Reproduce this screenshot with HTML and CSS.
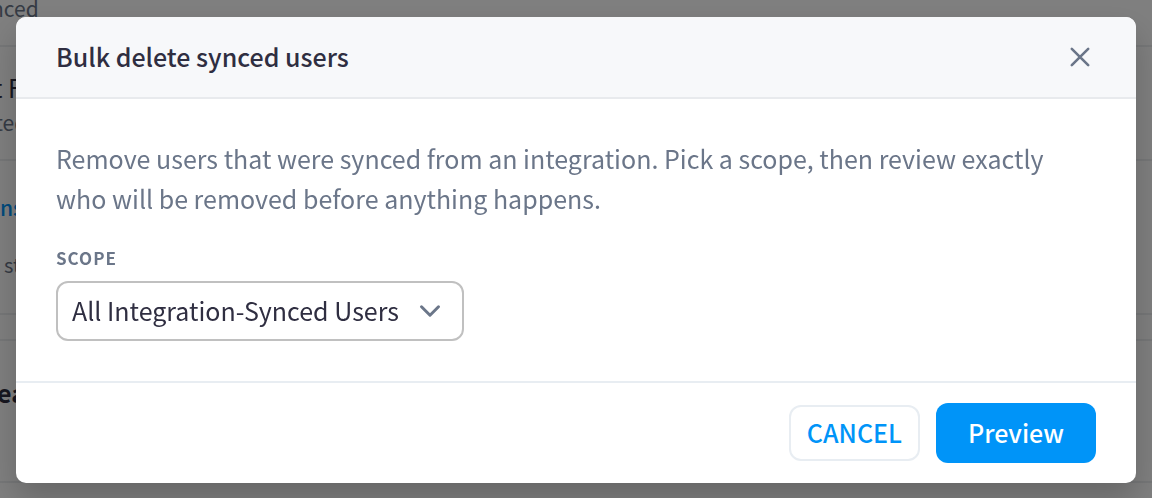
FILE: index.html
```html
<!DOCTYPE html>
<html lang="en">
<head>
    <meta charset="UTF-8">
    <meta name="viewport" content="width=device-width, initial-scale=1.0">
    <title>Bulk delete synced users</title>
    <link rel="stylesheet" href="styles.css">
</head>
<body>
    <div class="page" aria-hidden="true">
        <div class="page__row page__row--top">
            <p class="page__note">nced</p>
        </div>
        <div class="page__row page__row--item">
            <p class="page__name">t F</p>
            <p class="page__note">ted</p>
        </div>
        <div class="page__row page__row--links">
            <p class="page__link">ns</p>
            <p class="page__hint">st</p>
        </div>
        <div class="page__row page__row--gap"></div>
        <div class="page__row page__row--title">
            <p class="page__title">ea</p>
        </div>
    </div>
    <div class="overlay">
        <form class="modal" role="dialog" aria-modal="true" aria-labelledby="modal-title">
            <header class="modal__header">
                <h1 class="modal__title" id="modal-title">Bulk delete synced users</h1>
                <button class="modal__close" type="button" aria-label="Close">
                    <svg width="32" height="32" viewBox="0 0 32 32" fill="none" stroke="currentColor" stroke-width="2.6" stroke-linecap="round">
                        <path d="M7.8 7.8L24.2 24.2M24.2 7.8L7.8 24.2"/>
                    </svg>
                </button>
            </header>
            <div class="modal__body">
                <p class="modal__text">Remove users that were synced from an integration. Pick a scope, then review exactly who will be removed before anything happens.</p>
                <label class="modal__label" for="scope">SCOPE</label>
                <div class="select">
                    <select class="select__field" id="scope">
                        <option>All Integration-Synced Users</option>
                    </select>
                    <svg class="select__arrow" width="24" height="24" viewBox="0 0 24 24" fill="none" stroke="currentColor" stroke-width="3" stroke-linecap="round" stroke-linejoin="round">
                        <path d="M3.5 7.8L12 16.2L20.5 7.8"/>
                    </svg>
                </div>
            </div>
            <footer class="modal__footer">
                <button class="button button--cancel" type="button">CANCEL</button>
                <button class="button button--primary" type="submit">Preview</button>
            </footer>
        </form>
    </div>
</body>
</html>
```
FILE: styles.css
```css
* {
    box-sizing: border-box;
}
body {
    margin: 0;
    overflow: hidden;
    font-family: "Noto Sans CJK SC", "Open Sans", sans-serif;
    font-size: 25px;
    line-height: 40px;
    color: rgb(47,46,65);
    background-color: rgb(255,255,255);
}
p,
h1 {
    margin: 0;
}
.page {
    height: 100vh;
    overflow: hidden;
}
.page__row {
    border-bottom: 2px solid rgb(236,238,240);
    white-space: nowrap;
}
.page__row--top {
    height: 47px;
}
.page__row--top .page__note {
    margin-left: -9px;
    line-height: 16px;
}
.page__row--item {
    height: 114px;
    padding-top: 20px;
}
.page__row--links {
    height: 154px;
    padding-top: 26px;
}
.page__row--gap {
    height: 26px;
}
.page__row--title {
    height: 142px;
    padding-top: 31px;
}
.page__note {
    font-size: 21px;
    line-height: 30px;
    color: rgb(107,118,137);
}
.page__row--item .page__note {
    margin-left: -5px;
}
.page__name {
    margin-left: -7px;
}
.page__link {
    font-size: 21px;
    font-weight: 500;
    color: rgb(0,148,248);
}
.page__hint {
    margin-top: 18px;
    margin-left: 4px;
    font-size: 20px;
    color: rgb(107,118,137);
}
.page__title {
    margin-left: -3px;
    font-weight: bold;
}
.overlay {
    position: fixed;
    inset: 0;
    padding: 17px 16px;
    background-color: rgba(0,0,0,0.5);
}
.modal {
    border-radius: 10px;
    overflow: hidden;
    background-color: rgb(255,255,255);
    box-shadow: 0 16px 32px rgba(0,0,0,0.2);
}
.modal__header {
    display: flex;
    justify-content: space-between;
    align-items: center;
    height: 82px;
    padding: 0 40px;
    border-bottom: 2px solid rgb(232,234,237);
    background-color: rgb(247,248,250);
}
.modal__title {
    padding-bottom: 2px;
    font-size: 25px;
    font-weight: 500;
}
.modal__close {
    display: flex;
    padding: 0;
    border: none;
    background: none;
    color: rgb(107,118,137);
    cursor: pointer;
}
.modal__body {
    padding: 39px 40px 40px;
}
.modal__text {
    color: rgb(107,118,137);
}
.modal__label {
    display: block;
    margin: 25px 0 9px;
    font-size: 17px;
    font-weight: bold;
    line-height: 29px;
    letter-spacing: 1px;
    color: rgb(107,118,137);
}
.select {
    display: inline-grid;
    align-items: center;
    vertical-align: top;
}
.select__field {
    grid-area: 1 / 1;
    height: 60px;
    padding: 0 63px 2px 14px;
    border: 2px solid rgb(192,192,192);
    border-radius: 12px;
    appearance: none;
    background-color: rgb(255,255,255);
    font: inherit;
    color: inherit;
}
.select__arrow {
    grid-area: 1 / 1;
    justify-self: end;
    margin-right: 22px;
    color: rgb(107,118,137);
    pointer-events: none;
}
.modal__footer {
    display: flex;
    justify-content: flex-end;
    align-items: center;
    gap: 16px;
    padding: 20px 40px;
    border-top: 2px solid rgb(232,237,242);
}
.button {
    border-radius: 12px;
    font: inherit;
    font-weight: 500;
    cursor: pointer;
}
.button--cancel {
    padding: 5px 16px 7px;
    border: 2px solid rgb(232,237,242);
    background-color: rgb(255,255,255);
    color: rgb(0,148,248);
}
.button--primary {
    padding: 9px 32px 11px;
    border: none;
    background-color: rgb(0,148,248);
    color: rgb(255,255,255);
}
```
